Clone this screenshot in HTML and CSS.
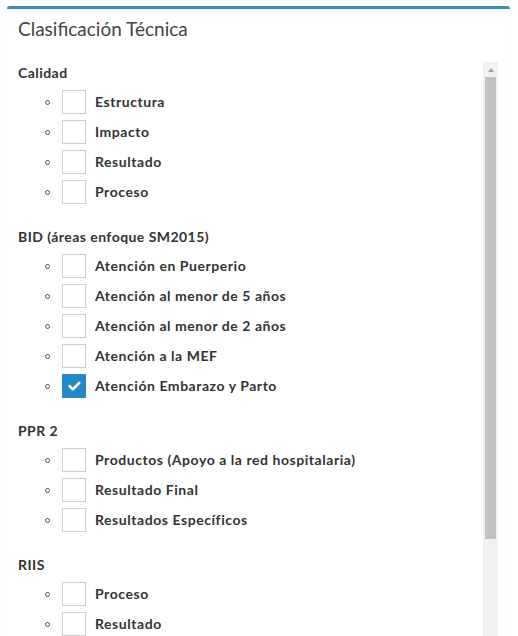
FILE: index.html
```html
<!DOCTYPE html>
<html lang="es">
<head>
<meta charset="utf-8">
<title>Clasificación Técnica</title>
<link rel="stylesheet" href="styles.css">
</head>
<body>
<div class="box">
  <div class="box-header">
    <h3 class="box-title">Clasificación Técnica</h3>
  </div>
  <div class="box-body">
    <div class="scroll-area">
      <div class="scroll-content">
        <div class="group">
          <div class="group-title">Calidad</div>
          <ul class="options">
            <li class="option"><span class="bullet"></span><span class="check"></span><span class="label">Estructura</span></li>
            <li class="option"><span class="bullet"></span><span class="check"></span><span class="label">Impacto</span></li>
            <li class="option"><span class="bullet"></span><span class="check"></span><span class="label">Resultado</span></li>
            <li class="option"><span class="bullet"></span><span class="check"></span><span class="label">Proceso</span></li>
          </ul>
        </div>
        <div class="group">
          <div class="group-title">BID (áreas enfoque SM2015)</div>
          <ul class="options">
            <li class="option"><span class="bullet"></span><span class="check"></span><span class="label">Atención en Puerperio</span></li>
            <li class="option"><span class="bullet"></span><span class="check"></span><span class="label">Atención al menor de 5 años</span></li>
            <li class="option"><span class="bullet"></span><span class="check"></span><span class="label">Atención al menor de 2 años</span></li>
            <li class="option"><span class="bullet"></span><span class="check"></span><span class="label">Atención a la MEF</span></li>
            <li class="option"><span class="bullet"></span><span class="check checked"><svg width="24" height="24" viewBox="0 0 24 24"><polyline points="7.6,12.2 10.8,15.2 17.2,9" fill="none" stroke="#fff" stroke-width="2.6" stroke-linecap="round" stroke-linejoin="round"/></svg></span><span class="label">Atención Embarazo y Parto</span></li>
          </ul>
        </div>
        <div class="group">
          <div class="group-title">PPR 2</div>
          <ul class="options">
            <li class="option"><span class="bullet"></span><span class="check"></span><span class="label">Productos (Apoyo a la red hospitalaria)</span></li>
            <li class="option"><span class="bullet"></span><span class="check"></span><span class="label">Resultado Final</span></li>
            <li class="option"><span class="bullet"></span><span class="check"></span><span class="label">Resultados Específicos</span></li>
          </ul>
        </div>
        <div class="group">
          <div class="group-title">RIIS</div>
          <ul class="options">
            <li class="option"><span class="bullet"></span><span class="check"></span><span class="label">Proceso</span></li>
            <li class="option"><span class="bullet"></span><span class="check"></span><span class="label">Resultado</span></li>
          </ul>
        </div>
      </div>
      <div class="scrollbar">
        <div class="sb-button"><span class="sb-arrow"></span></div>
        <div class="sb-track"><div class="sb-thumb"></div></div>
      </div>
    </div>
  </div>
</div>
</body>
</html>
```

FILE: styles.css
```css
html, body {
  margin: 0;
  background: #fff;
}
body {
  padding: 6px 8px 0 7px;
  height: 636px;
  box-sizing: border-box;
  overflow: hidden;
  font-family: Lato, "Liberation Sans", sans-serif;
  color: #333;
}
.box {
  background: #fff;
  border-top: 3px solid #3c8dbc;
  border-radius: 3px;
  box-shadow: 0 0 1px rgba(0, 0, 0, 0.18);
  height: 700px;
}
.box-header {
  padding: 10px 11px 9px 11px;
}
.box-title {
  margin: 0;
  font-size: 19px;
  line-height: 20px;
  font-weight: 400;
  color: #444;
}
.box-body {
  padding: 14px 12px 0 11px;
}
.scroll-area {
  display: flex;
  height: 620px;
}
.scroll-content {
  flex: 1;
  padding-top: 1px;
  display: flex;
  flex-direction: column;
  gap: 23px;
}
.group {
  display: flex;
  flex-direction: column;
  gap: 7px;
}
.group-title {
  font-size: 14px;
  line-height: 20px;
  font-weight: 700;
  letter-spacing: 0.45px;
}
.options {
  list-style: none;
  margin: 0;
  padding: 0;
  display: flex;
  flex-direction: column;
  gap: 6px;
}
.option {
  display: flex;
  align-items: center;
  height: 24px;
}
.bullet {
  width: 5px;
  height: 5px;
  box-sizing: border-box;
  border: 1px solid #555;
  border-radius: 50%;
  margin-left: 27px;
  margin-right: 12px;
}
.check {
  width: 24px;
  height: 24px;
  box-sizing: border-box;
  border: 1px solid #d3cec9;
  background: #fff;
  flex: none;
}
.check.checked {
  border-color: #2489c5;
  background: #2489c5;
}
.check.checked svg {
  display: block;
  margin: -1px;
}
.label {
  margin-left: 9px;
  font-size: 14px;
  line-height: 20px;
  font-weight: 700;
  letter-spacing: 0.55px;
  white-space: nowrap;
}
.scrollbar {
  width: 15px;
  display: flex;
  flex-direction: column;
  background: #f1f1f1;
}
.sb-button {
  height: 15px;
  display: flex;
  align-items: center;
  justify-content: center;
}
.sb-arrow {
  width: 0;
  height: 0;
  border-left: 3.5px solid transparent;
  border-right: 3.5px solid transparent;
  border-bottom: 4px solid #a3a3a3;
}
.sb-track {
  flex: 1;
  padding: 0 2px;
}
.sb-thumb {
  height: 462px;
  background: #c1c1c1;
}
```
